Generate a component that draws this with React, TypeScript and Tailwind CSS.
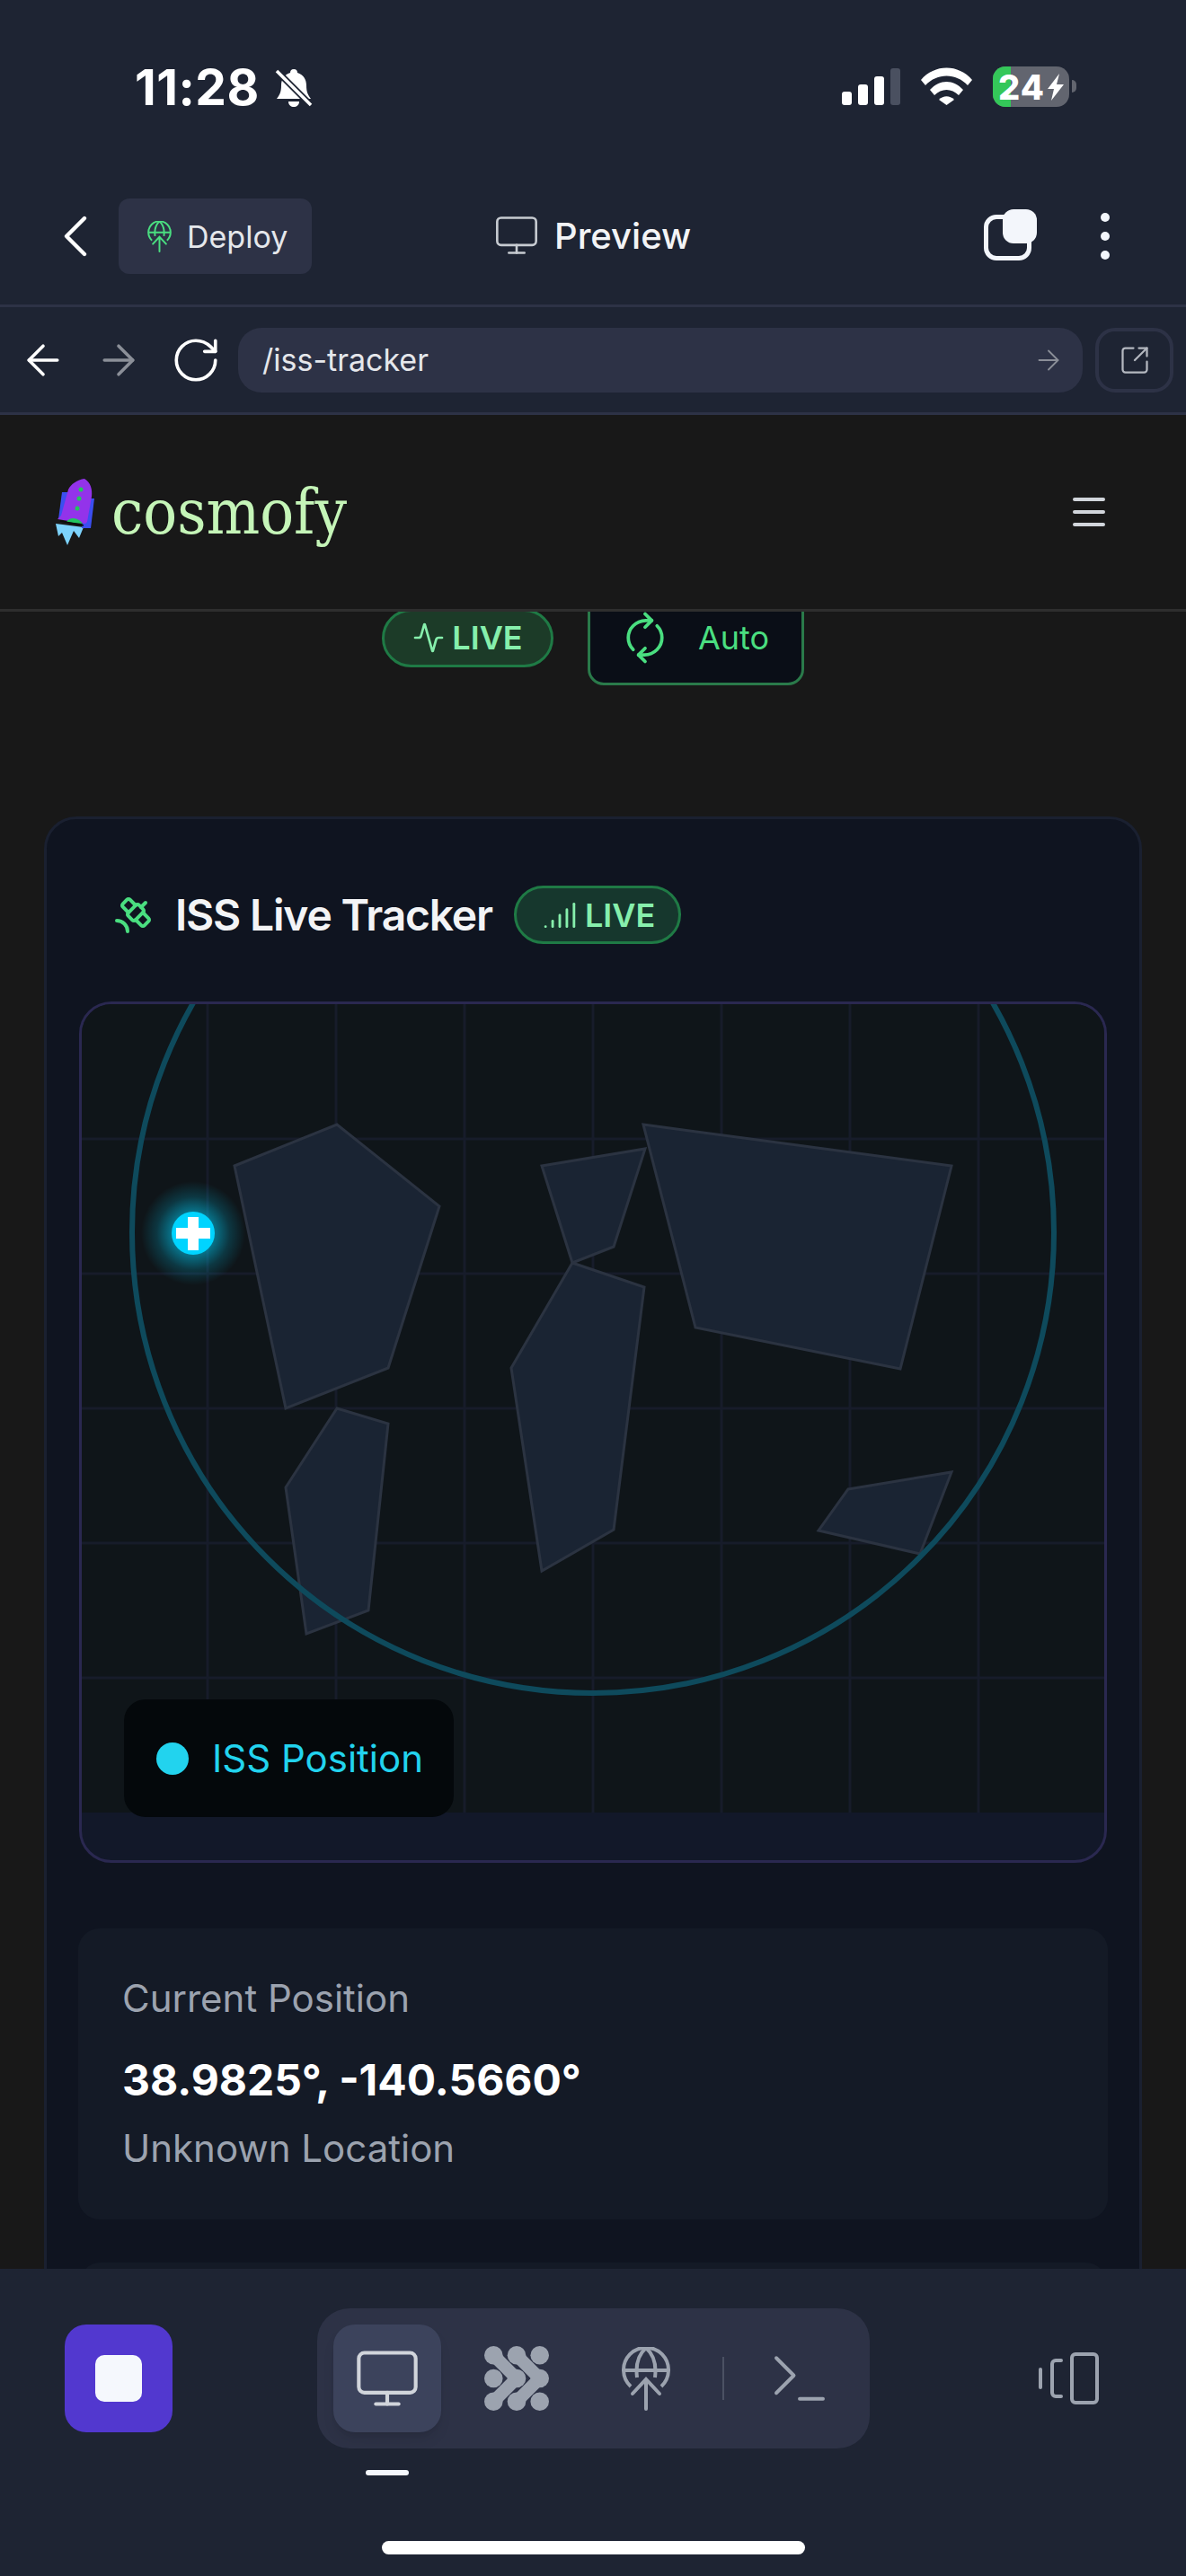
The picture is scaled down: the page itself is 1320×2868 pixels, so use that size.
import { Activity, ArrowLeft, ArrowRight, ChevronLeft, RefreshCw, RotateCw, SquareArrowOutUpRight, Signal, Menu, Terminal, Monitor, Satellite } from 'lucide-react';

const inter = "font-['Inter',sans-serif]";

const continents = [
  '173,180 287,134 401,225 344,405 230,450',
  '287,450 344,467 322,675 253,701 230,538',
  '515,180 630,161 595,270 549,288',
  '549,288 629,315 595,585 515,631 481,405',
  '628,134 971,180 914,406 686,360',
  '856,540 971,521 936,612 823,586',
];

function GlobeArrow({ className }: { className: string }) {
  return (
    <svg viewBox="0 0 54 71" fill="none" stroke="currentColor" strokeWidth="4" strokeLinecap="round" className={className}>
      <path d="M10 44A25 25 0 1 1 44 44" strokeLinecap="butt" />
      <path d="M27 1C19 8 15 18 17 34M27 1c8 7 12 17 10 33M2 26h50" strokeLinecap="butt" />
      <path d="M27 69V36M12 52l15-16 15 16" />
    </svg>
  );
}

function StatusBar() {
  return (
    <div className="flex h-[220px] items-start">
      <div className={`${inter} ml-[150px] mt-[66px] w-[142px] text-[55px] font-bold leading-[62px] tracking-[0.5px] text-white`}>11:28</div>
      <svg viewBox="0 0 44 44" className="ml-[13px] mt-[76px] h-[44px] w-[44px]" fill="white">
        <path d="M22 1c3 0 4 2 4 4 7 2 10 8 10 14 0 8 2 11 5 15H3c3-4 5-7 5-15 0-6 3-12 10-14 0-2 1-4 4-4zM16 37h12c0 4-3 6-6 6s-6-2-6-6z" />
        <path d="M3 3l38 38" stroke="#1e2433" strokeWidth="7" />
        <path d="M3 3l38 38" stroke="white" strokeWidth="3.5" />
      </svg>
      <div className="ml-[588px] mt-[76px] flex h-[41px] items-end gap-[7px]">
        <div className="h-[15px] w-[11px] rounded-[3px] bg-white" />
        <div className="h-[23px] w-[11px] rounded-[3px] bg-white" />
        <div className="h-[32px] w-[11px] rounded-[3px] bg-white" />
        <div className="h-[41px] w-[11px] rounded-[3px] bg-[#4a5060]" />
      </div>
      <svg viewBox="0 0 57 42" className="ml-[23px] mt-[75px] h-[42px] w-[57px]" fill="white">
        <path d="M0 14C15-4 42-4 57 14l-5 6C39 6 18 6 5 20z" />
        <path d="M10 25c11-12 26-12 37 0l-5 6c-8-8-19-8-27 0z" />
        <path d="M20 36c5-5 12-5 17 0l-8.500 6z" />
      </svg>
      <div className="relative ml-[23px] mt-[74px] flex h-[45px] w-[85px] items-center overflow-hidden rounded-[14px] bg-[#62656f]">
        <div className="absolute inset-y-0 left-0 w-[20px] bg-[#34c759]" />
        <span className={`${inter} relative ml-[6px] text-[38px] font-extrabold leading-none tracking-[1px] text-white`}>24</span>
        <svg viewBox="0 0 20 30" className="relative ml-[2px] h-[30px] w-[20px]" fill="white">
          <path d="M14 0L1 17h7l-3 13L19 12h-8z" />
        </svg>
      </div>
      <div className="ml-[3px] mt-[89px] h-[14px] w-[5px] rounded-r-full bg-[#62656f]" />
    </div>
  );
}

function TopBar() {
  return (
    <div className="flex h-[122px] items-start border-b-[3px] border-[#2d3246]">
      <ChevronLeft strokeWidth={1.3} className="ml-[44px] mt-[3px] h-[80px] w-[80px] text-white" />
      <div className="ml-[8px] mt-[1px] flex h-[84px] w-[215px] items-center rounded-[12px] bg-[#2d3246]">
        <GlobeArrow className="ml-[32px] h-[35px] w-[27px] text-[#4ade80]" />
        <span className={`${inter} ml-[17px] text-[34px] text-[#e5e7eb]`}>Deploy</span>
      </div>
      <Monitor strokeWidth={1.2} className="ml-[202px] mt-[16px] h-[52px] w-[52px] text-[#c7cbd1]" />
      <span className={`${inter} ml-[16px] mt-[16px] w-[151px] text-[40px] font-medium leading-[54px] text-[#f3f4f6]`}>Preview</span>
      <div className="relative ml-[327px] mt-[13px] h-[57px] w-[59px]">
        <div className="absolute bottom-0 left-0 h-[51px] w-[53px] rounded-[14px] border-[5px] border-[#f3f6fb]" />
        <div className="absolute right-0 top-0 h-[38px] w-[38px] rounded-[12px] bg-[#f3f6fb]" />
      </div>
      <div className="ml-[71px] mt-[17px] flex flex-col gap-[11px]">
        <div className="h-[10px] w-[10px] rounded-full bg-[#f3f6fb]" />
        <div className="h-[10px] w-[10px] rounded-full bg-[#f3f6fb]" />
        <div className="h-[10px] w-[10px] rounded-full bg-[#f3f6fb]" />
      </div>
    </div>
  );
}

function UrlBar() {
  return (
    <div className="flex h-[120px] items-center border-b-[3px] border-[#2d3246]">
      <ArrowLeft strokeWidth={1.6} className="ml-[21px] h-[54px] w-[54px] text-white" />
      <ArrowRight strokeWidth={1.6} className="ml-[30px] h-[54px] w-[54px] text-[#8b8f98]" />
      <RotateCw strokeWidth={1.5} className="ml-[30px] h-[58px] w-[58px] text-white" />
      <div className="ml-[18px] flex h-[72px] w-[940px] items-center justify-between rounded-[26px] bg-[#2d3246] pl-[27px] pr-[20px]">
        <span className={`${inter} text-[34px] text-[#e5e7eb]`}>/iss-tracker</span>
        <ArrowRight strokeWidth={1.2} className="h-[36px] w-[36px] text-[#8b8f98]" />
      </div>
      <div className="ml-[14px] flex h-[72px] w-[87px] items-center justify-center rounded-[22px] border-[4px] border-[#2d3246]">
        <SquareArrowOutUpRight strokeWidth={1.5} className="h-[36px] w-[36px] text-[#b4b8c0]" />
      </div>
    </div>
  );
}

function Rocket() {
  return (
    <svg viewBox="0 0 44 74" className="h-[74px] w-[44px]">
      <path d="M0 50l3 14 4-4 6 14 7-16 6 8 5-12z" fill="#7dd3fc" />
      <path d="M7 15h10l-4 30H3z" fill="#3b4ef0" />
      <path d="M33 22h10l-4 33H29z" fill="#3b4ef0" />
      <path d="M32 0c7 4 9 12 8 20l-5 28-2 2-31-5 4-4 8-29c3-6 10-11 18-12z" fill="#9333ea" />
      <path d="M12 48c4-6 13-5 18 2z" fill="#22c55e" />
      <path d="M5 47l26 5" stroke="#0b0b0b" strokeWidth="1.500" />
      <circle cx="28" cy="12" r="2.500" fill="#22c55e" />
      <circle cx="26" cy="22" r="2.500" fill="#22c55e" />
      <circle cx="24" cy="33" r="2.500" fill="#22c55e" />
    </svg>
  );
}

function SiteHeader() {
  return (
    <div className="flex h-[219px] items-center justify-between border-b-[3px] border-[#2e2e2e] bg-[#181818] pl-[62px] pr-[84px]">
      <div className="flex items-center">
        <Rocket />
        <span className="ml-[18px] text-[70px] leading-none text-[#c5f5b8] [font-stretch:condensed] font-['DejaVu_Serif',serif]">cosmofy</span>
      </div>
      <Menu strokeWidth={2} className="h-[48px] w-[48px] text-[#d1d5db]" />
    </div>
  );
}

function MapPanel() {
  return (
    <div className="relative mt-[64px] overflow-hidden rounded-[36px] border-[3px] border-[#2a2850] bg-[#121829] pb-[53px]">
      <svg viewBox="3 0 1138 900" className="block h-[900px] w-[1138px] bg-[#0f1519]">
        {[143, 286, 429, 572, 715, 858, 1001].map((x) => (
          <line key={x} x1={x} y1="0" x2={x} y2="900" stroke="#171c2a" strokeWidth="3" />
        ))}
        {[150, 300, 450, 600, 750].map((y) => (
          <line key={y} x1="0" y1={y} x2="1141" y2={y} stroke="#171c2a" strokeWidth="3" />
        ))}
        {continents.map((points) => (
          <polygon key={points} points={points} fill="#1a2433" stroke="#2b3341" strokeWidth="3" />
        ))}
        <circle cx="572" cy="254" r="513" fill="none" stroke="#0e4a5c" strokeWidth="6" />
        <defs>
          <radialGradient id="glow">
            <stop offset="40%" stopColor="#00d4ff" stopOpacity="0.5" />
            <stop offset="70%" stopColor="#00d4ff" stopOpacity="0.18" />
            <stop offset="100%" stopColor="#00d4ff" stopOpacity="0" />
          </radialGradient>
        </defs>
        <circle cx="127" cy="255" r="58" fill="url(#glow)" />
        <circle cx="127" cy="255" r="24" fill="#00d4ff" />
        <rect x="108" y="249" width="38" height="12" fill="white" />
        <rect x="121" y="237" width="12" height="37" fill="white" />
      </svg>
      <div className="absolute bottom-[48px] left-[47px] flex h-[131px] w-[367px] items-center rounded-[24px] bg-[#04080b] pl-[36px]">
        <div className="h-[36px] w-[36px] rounded-full bg-[#22d3ee]" />
        <span className={`${inter} ml-[26px] text-[42px] text-[#22d3ee]`}>ISS Position</span>
      </div>
    </div>
  );
}

function TrackerCard() {
  return (
    <div className="mx-[49px] mt-[146px] rounded-t-[36px] border-[3px] border-[#1a2030] bg-[#0f1420] px-[36px] pt-[74px]">
      <div className="flex h-[65px] items-center">
        <Satellite strokeWidth={2} className="ml-[36px] h-[48px] w-[48px] text-[#4ade80]" />
        <span className={`${inter} ml-[23px] w-[352px] whitespace-nowrap text-[48px] font-semibold leading-none tracking-[-1.2px] text-[#f3f4f6]`}>ISS Live Tracker</span>
        <div className="ml-[25px] flex h-[65px] w-[186px] items-center rounded-full border-[3px] border-[#1f7a45] bg-[#16372d] pl-[29px]">
          <Signal strokeWidth={1.8} className="h-[38px] w-[38px] text-[#86efac]" />
          <span className={`${inter} ml-[9px] text-[36px] font-semibold text-[#86efac]`}>LIVE</span>
        </div>
      </div>
      <MapPanel />
      <div className="-mx-px mt-[73px] flex h-[324px] flex-col rounded-[24px] bg-[#141a26] pl-[49px]">
        <span className={`${inter} mt-[52px] text-[42px] leading-[52px] text-[#9ca3af]`}>Current Position</span>
        <span className={`${inter} mt-[35px] text-[48px] font-bold leading-[60px] text-white`}>38.9825°, -140.5660°</span>
        <span className={`${inter} mt-[20px] text-[42px] leading-[52px] text-[#9ca3af]`}>Unknown Location</span>
      </div>
      <div className="mt-[48px] h-[200px] rounded-[24px] bg-[#141a26]" />
    </div>
  );
}

function BlobsIcon() {
  return (
    <svg viewBox="0 0 72 72" className="ml-[48px] h-[72px] w-[72px]" fill="#9ca3af" stroke="none">
      <circle cx="10.300" cy="10.300" r="10.300" />
      <circle cx="36" cy="10.300" r="10.300" />
      <circle cx="61.700" cy="10.300" r="10.300" />
      <circle cx="10.300" cy="36" r="10.300" />
      <circle cx="36" cy="36" r="10.300" />
      <circle cx="61.700" cy="36" r="10.300" />
      <circle cx="10.300" cy="61.700" r="10.300" />
      <circle cx="36" cy="61.700" r="10.300" />
      <circle cx="61.700" cy="61.700" r="10.300" />
      <path d="M10.300 10.300L36 36L10.300 61.700M36 10.300L61.700 36L36 61.700" fill="none" stroke="#9ca3af" strokeWidth="14" />
    </svg>
  );
}

function BottomBar() {
  return (
    <div className="relative z-10 flex h-[342px] flex-col bg-[#1e2433]">
      <div className="mt-[44px] flex items-center">
        <div className="ml-[72px] flex h-[120px] w-[120px] items-center justify-center rounded-[24px] bg-[#5238cf]">
          <div className="h-[52px] w-[52px] rounded-[10px] bg-[#f5f8fd]" />
        </div>
        <div className="ml-[161px] flex h-[156px] w-[615px] items-center rounded-[36px] bg-[#2d3246] pl-[18px]">
          <div className="flex h-[120px] w-[120px] items-center justify-center rounded-[24px] bg-[#3c435c] shadow-lg">
            <Monitor strokeWidth={1.3} className="h-[76px] w-[76px] text-[#d1d5db]" />
          </div>
          <BlobsIcon />
          <GlobeArrow className="ml-[81px] h-[71px] w-[54px] text-[#9ca3af]" />
          <div className="ml-[58px] h-[48px] w-[2px] bg-[#4b5163]" />
          <Terminal strokeWidth={1.2} className="ml-[45px] h-[78px] w-[78px] text-[#9ca3af]" />
        </div>
        <svg viewBox="0 0 68 58" fill="none" stroke="#9ca3af" strokeWidth="4" className="ml-[187px] h-[58px] w-[68px]">
          <rect x="38" y="2" width="28" height="54" rx="4" />
          <path d="M26 9h-6a4 4 0 0 0-4 4v32a4 4 0 0 0 4 4h6M3 19v20" strokeLinecap="round" />
        </svg>
      </div>
      <div className="ml-[407px] mt-[24px] h-[6px] w-[48px] rounded-full bg-[#f5f8fd]" />
      <div className="ml-[425px] mt-[73px] h-[15px] w-[471px] rounded-full bg-white" />
    </div>
  );
}

export default function App() {
  return (
    <div className="flex h-[2868px] w-[1320px] flex-col overflow-hidden bg-[#1e2433]">
      <StatusBar />
      <TopBar />
      <UrlBar />
      <SiteHeader />
      <main className="min-h-0 flex-1 overflow-hidden bg-[#181818]">
        <div className="-mt-[24px] flex h-[106px] items-center justify-center gap-[38px]">
          <div className="flex h-[65px] w-[191px] items-center justify-center rounded-full border-[3px] border-[#1f7a45] bg-[#1c3b28]">
            <Activity strokeWidth={1.8} className="h-[36px] w-[36px] text-[#86efac]" />
            <span className={`${inter} ml-[8px] text-[36px] font-semibold text-[#86efac]`}>LIVE</span>
          </div>
          <div className="flex h-[106px] w-[241px] items-center justify-center gap-[34px] rounded-[18px] border-[3px] border-[#2a7a4a] bg-[#0a0e17]">
            <RefreshCw strokeWidth={1.8} className="h-[50px] w-[50px] -rotate-45 text-[#4ade80]" />
            <span className={`${inter} text-[36px] text-[#4ade80]`}>Auto</span>
          </div>
        </div>
        <TrackerCard />
      </main>
      <BottomBar />
    </div>
  );
}
